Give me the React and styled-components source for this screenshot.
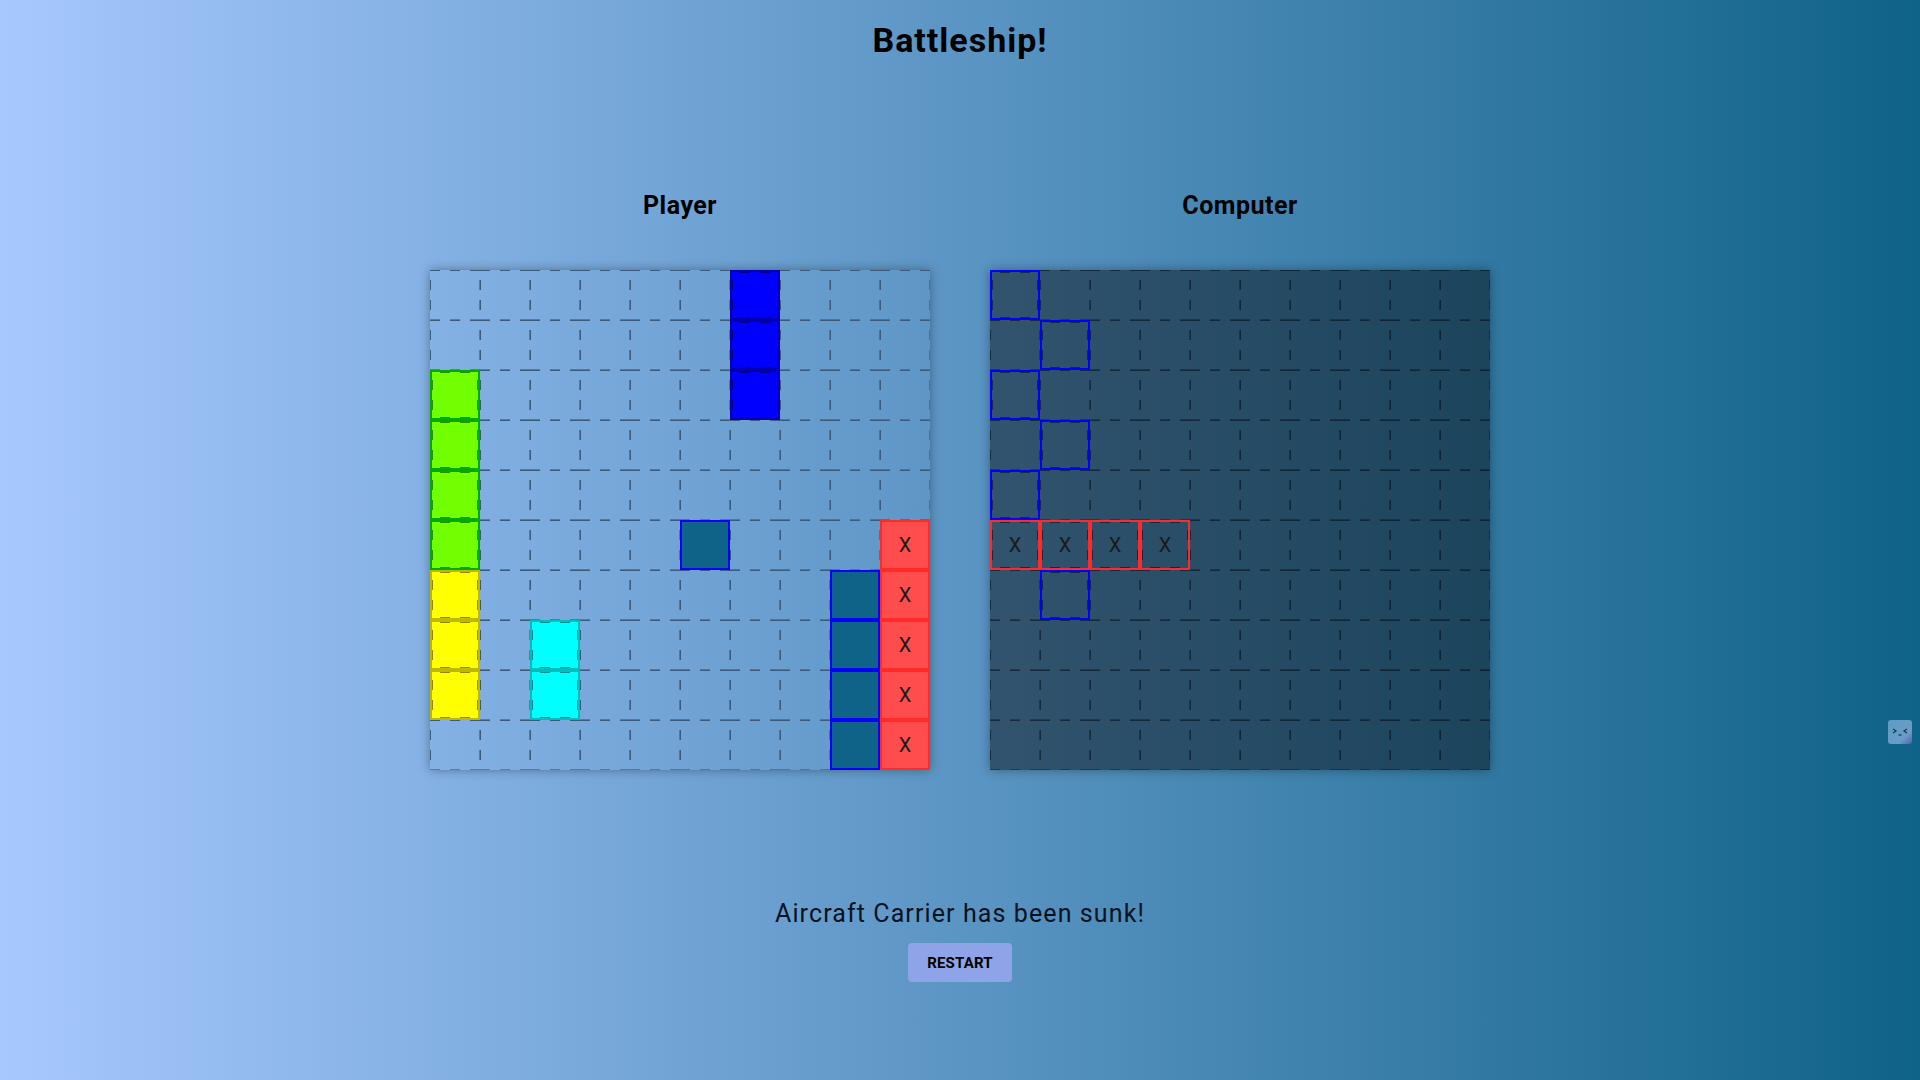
import React from 'react';
import styled, { createGlobalStyle } from 'styled-components';

const GlobalStyle = createGlobalStyle`
  html, body {
    margin: 0;
    padding: 0;
  }
  body {
    font-family: Roboto, "Noto Sans", sans-serif;
    color: #000;
  }
`;

const Page = styled.div`
  position: relative;
  box-sizing: border-box;
  height: 1080px;
  padding-top: 19px;
  display: flex;
  flex-direction: column;
  align-items: center;
  overflow: hidden;
  background: linear-gradient(to right, #a7c8ff, #0f6288);
`;

const Title = styled.h1`
  margin: 0;
  height: 42px;
  line-height: 42px;
  font-size: 34px;
  font-weight: 700;
  letter-spacing: 1px;
`;

const Boards = styled.div`
  display: flex;
  gap: 60px;
  margin-top: 130px;
`;

const BoardColumn = styled.section`
  display: flex;
  flex-direction: column;
  align-items: center;
`;

const BoardName = styled.h2`
  margin: 0 0 49px;
  height: 30px;
  line-height: 30px;
  font-size: 25px;
  font-weight: 700;
  letter-spacing: 0.5px;
`;

const Grid = styled.div`
  display: grid;
  position: relative;
  grid-template-columns: repeat(10, 50px);
  grid-template-rows: repeat(10, 50px);
  background: ${(p) => (p.$dark ? 'rgba(0, 0, 0, 0.43)' : 'transparent')};
  box-shadow: 0 0 10px rgba(0, 0, 0, 0.35);
`;

const lineColor = (p) => (p.$dark ? 'rgba(0, 10, 20, 0.55)' : '#3b5a7c');
const softLine = (p) => (p.$dark ? 'rgba(0, 10, 20, 0.35)' : 'rgba(59, 90, 124, 0.6)');

const across = (color) => `repeating-linear-gradient(to right, ${color} 0 10px, transparent 10px 20px)`;
const down = (color) => `repeating-linear-gradient(to bottom, transparent 0 10px, ${color} 10px 20px)`;
const innerAcross = (color) => `repeating-linear-gradient(to right, transparent 0 8px, ${color} 8px 18px, transparent 18px 20px)`;
const innerDown = (color) => `repeating-linear-gradient(to bottom, transparent 0 8px, ${color} 8px 18px, transparent 18px 20px)`;

// every cell draws its own dashed edges, neighbours together make the grid line
const Cell = styled.div`
  position: relative;
  box-sizing: border-box;
  display: flex;
  align-items: center;
  justify-content: center;
  font-size: 20px;
  color: #1a1a1a;
  background-color: ${(p) => p.$fill || 'transparent'};
  border: ${(p) => (p.$edge ? `2px solid ${p.$edge}` : 'none')};
  background-image: ${(p) =>
    p.$edge
      ? 'none'
      : `${across(lineColor(p))}, ${down(lineColor(p))}, ${across(softLine(p))}, ${down(softLine(p))}`};
  background-size: 100% 1px, 1px 100%, 100% 1px, 1px 100%;
  background-position: 0 0, 0 0, 0 100%, 100% 0;
  background-repeat: no-repeat;

  &::after {
    content: ${(p) => (p.$dash ? '""' : 'none')};
    position: absolute;
    inset: 0;
    pointer-events: none;
    background-image:
      ${(p) => innerAcross(p.$dash)},
      ${(p) => innerAcross(p.$dash)},
      ${(p) => innerDown(p.$dash)},
      ${(p) => innerDown(p.$dash)};
    background-size: 100% 1px, 100% 1px, 1px 100%, 1px 100%;
    background-position: 0 0, 0 100%, 0 0, 100% 0;
    background-repeat: no-repeat;
  }
`;

const Message = styled.p`
  margin: 126px 0 0;
  height: 36px;
  line-height: 36px;
  font-size: 25px;
  letter-spacing: 1.1px;
  color: #06121f;
`;

const RestartButton = styled.button`
  margin-top: 11px;
  width: 104px;
  height: 39px;
  border: none;
  border-radius: 4px;
  background: #8fa4e8;
  color: #000;
  font-family: inherit;
  font-size: 15px;
  font-weight: 700;
  letter-spacing: 0.2px;
  text-transform: uppercase;
  cursor: pointer;
`;

const Widget = styled.div`
  position: absolute;
  top: 720px;
  right: 8px;
  width: 24px;
  height: 24px;
  border-radius: 3px;
  background: linear-gradient(135deg, #5f9cc4 0%, #6a9cc6 70%, #5560b4 100%);
  display: flex;
  align-items: center;
  justify-content: center;
`;

const styles = {
  green: { $fill: '#72ff00', $edge: '#00aa00', $dash: '#2d8f00' },
  yellow: { $fill: '#ffff00', $edge: '#bdb800', $dash: '#8f8a00' },
  cyan: { $fill: '#00ffff', $edge: '#00bcbc', $dash: '#008f8f' },
  blue: { $fill: '#0000ff', $edge: '#0000b0', $dash: '#000088' },
  miss: { $fill: '#0f6288', $edge: '#0000ff' },
  hit: { $fill: '#ff4d4d', $edge: '#ff2a2a', text: 'X' },
  hidden: { $edge: '#0000ff', $dash: 'rgba(0, 10, 20, 0.55)' },
  struck: { $edge: '#ff2a2a', $dash: 'rgba(0, 10, 20, 0.55)', text: 'X' },
};

const playerCells = {
  '0-6': 'blue', '1-6': 'blue', '2-6': 'blue',
  '2-0': 'green', '3-0': 'green', '4-0': 'green', '5-0': 'green',
  '6-0': 'yellow', '7-0': 'yellow', '8-0': 'yellow',
  '7-2': 'cyan', '8-2': 'cyan',
  '5-5': 'miss', '6-8': 'miss', '7-8': 'miss', '8-8': 'miss', '9-8': 'miss',
  '5-9': 'hit', '6-9': 'hit', '7-9': 'hit', '8-9': 'hit', '9-9': 'hit',
};

const computerCells = {
  '0-0': 'hidden', '1-1': 'hidden', '2-0': 'hidden', '3-1': 'hidden', '4-0': 'hidden', '6-1': 'hidden',
  '5-0': 'struck', '5-1': 'struck', '5-2': 'struck', '5-3': 'struck',
};

function Board({ name, cells, dark }) {
  const rows = [...Array(10).keys()];
  return (
    <BoardColumn>
      <BoardName>{name}</BoardName>
      <Grid $dark={dark}>
        {rows.map((r) =>
          rows.map((c) => {
            const { text, ...look } = styles[cells[`${r}-${c}`]] || {};
            return (
              <Cell key={`${r}-${c}`} $dark={dark} {...look}>
                {text}
              </Cell>
            );
          })
        )}
      </Grid>
    </BoardColumn>
  );
}

export default function App() {
  return (
    <Page>
      <GlobalStyle />
      <Title>Battleship!</Title>
      <Boards>
        <Board name="Player" cells={playerCells} />
        <Board name="Computer" cells={computerCells} dark />
      </Boards>
      <Message>Aircraft Carrier has been sunk!</Message>
      <RestartButton>Restart</RestartButton>
      <Widget>
        <svg width="16" height="10" viewBox="0 0 16 10" fill="none" stroke="#16384f" strokeWidth="1.2">
          <path d="M1 2l3 2-3 2" />
          <path d="M15 2l-3 2 3 2" />
          <path d="M6.5 8h3" />
        </svg>
      </Widget>
    </Page>
  );
}
